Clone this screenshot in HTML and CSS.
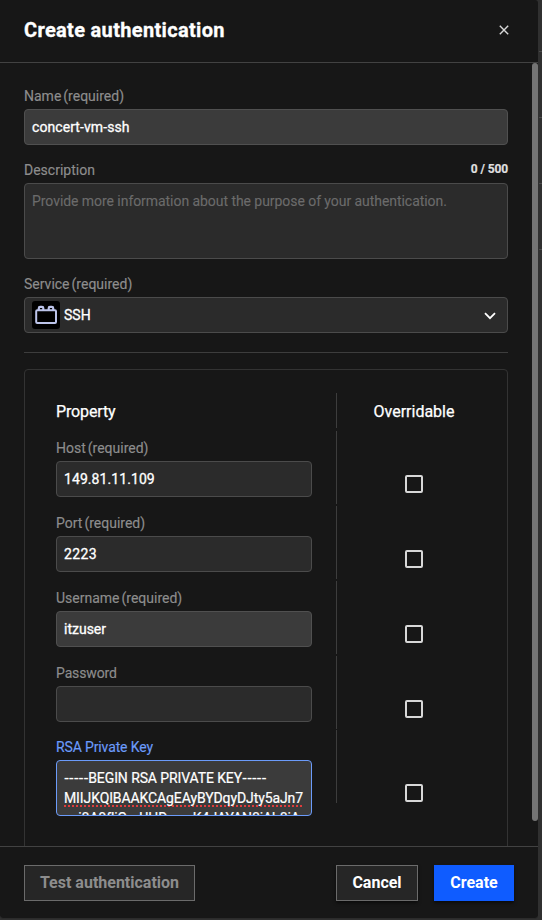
FILE: index.html
```html
<!DOCTYPE html>
<html lang="en">
<head>
<meta charset="utf-8">
<title>Create authentication</title>
<link rel="stylesheet" href="styles.css">
</head>
<body>
<div class="dialog">
  <header class="header">
    <h1 class="title"><span>Create authentication</span></h1>
    <svg class="close" width="10" height="10" viewBox="0 0 10 10"><path d="M.8 .8L9.2 9.2M9.2 .8L.8 9.2" fill="none" stroke="#d8d8d8" stroke-width="1.4"/></svg>
  </header>
  <div class="viewport">
    <main class="content">
      <section class="field">
        <div class="label"><span>Name</span><span class="req">(required)</span></div>
        <div class="input filled"><span class="t-name">concert-vm-ssh</span></div>
      </section>
      <section class="field">
        <div class="label"><span class="t-desc">Description</span><span class="counter">0 / 500</span></div>
        <div class="input area"><span class="placeholder">Provide more information about the purpose of your authentication.</span></div>
      </section>
      <section class="field">
        <div class="label"><span>Service</span><span class="req">(required)</span></div>
        <div class="input select">
          <svg class="brick" width="28" height="28" viewBox="0 0 28 28"><rect width="28" height="28" rx="3" fill="#000"/><rect x="4.2" y="9.3" width="19.8" height="12.7" rx="1" fill="none" stroke="#bcc4ea" stroke-width="2"/><path d="M6.8 9V7.2Q6.8 5.9 8.1 5.9H10Q11.3 5.9 11.3 7.2V9M16.7 9V7.2Q16.7 5.9 18 5.9H19.9Q21.2 5.9 21.2 7.2V9" fill="none" stroke="#bcc4ea" stroke-width="2.2"/></svg>
          <span class="t-ssh">SSH</span>
          <svg class="chevron" width="12" height="8" viewBox="0 0 12 8"><path d="M1 1.2L6 6.2L11 1.2" fill="none" stroke="#fff" stroke-width="1.8"/></svg>
        </div>
      </section>
      <hr class="divider">
      <section class="panel">
        <div class="row head"><div class="cell"><span class="t-prop">Property</span></div><div class="over"><span>Overridable</span></div></div>
        <div class="row">
          <div class="cell"><div class="label"><span>Host</span><span class="req">(required)</span></div><div class="input"><span class="t-host">149.81.11.109</span></div></div>
          <div class="over"><i class="check"></i></div>
        </div>
        <div class="row">
          <div class="cell"><div class="label"><span>Port</span><span class="req">(required)</span></div><div class="input"><span class="t-port">2223</span></div></div>
          <div class="over"><i class="check"></i></div>
        </div>
        <div class="row">
          <div class="cell"><div class="label"><span>Username</span><span class="req">(required)</span></div><div class="input filled"><span class="t-user">itzuser</span></div></div>
          <div class="over"><i class="check"></i></div>
        </div>
        <div class="row">
          <div class="cell"><div class="label"><span class="t-pass">Password</span></div><div class="input"></div></div>
          <div class="over"><i class="check"></i></div>
        </div>
        <div class="row last">
          <div class="cell"><div class="label blue"><span class="t-key">RSA Private Key</span></div><div class="input filled key"><span class="t-begin"><b>-----</b>BEGIN RSA PRIVATE KEY<b>-----</b></span><span class="spell">MIIJKQIBAAKCAgEAyBYDqyDJty5aJn7</span><span class="t-cut">yoi8A9fliQmUHDwocK4dAYAN8iAh8iA</span></div></div>
          <div class="over"><i class="check"></i></div>
        </div>
      </section>
    </main>
    <div class="track"><div class="thumb"></div></div>
  </div>
  <footer class="footer">
    <div class="button disabled"><span>Test authentication</span></div>
    <div class="button cancel"><span>Cancel</span></div>
    <div class="button primary"><span>Create</span></div>
  </footer>
</div>
</body>
</html>
```

FILE: styles.css
```css
* { box-sizing: border-box; }
body {
  margin: 0;
  width: 542px;
  height: 920px;
  overflow: hidden;
  background: linear-gradient(#4b4b4b, #4b4b4b) 539px 51px / 3px 1px no-repeat,
    linear-gradient(#4b4b4b, #4b4b4b) 539px 117px / 3px 1px no-repeat,
    linear-gradient(#4b4b4b, #4b4b4b) 539px 183px / 3px 1px no-repeat,
    linear-gradient(#4b4b4b, #4b4b4b) 539px 249px / 3px 1px no-repeat, #303030;
  color: #fff;
  font: 14px/20px Roboto, sans-serif;
}
.dialog {
  display: flex;
  flex-direction: column;
  width: 538px;
  height: 919px;
  background: #171717;
  border-bottom: 1px solid #2b2b2b;
  border-radius: 0 3px 4px 4px;
  overflow: hidden;
}
.header {
  display: flex;
  justify-content: space-between;
  align-items: center;
  flex: none;
  height: 63px;
  padding: 0 29px 2px 24px;
  border-bottom: 1px solid #424242;
}
.title { margin: 0; font-size: 20px; line-height: 24px; font-weight: 700; letter-spacing: .33px; -webkit-text-stroke: .3px; }
.viewport { display: flex; height: 783px; overflow: hidden; }
.content { flex: 1; padding: 24px 30px 0 24px; }
.field { margin-bottom: 16px; }
.label { display: flex; gap: 2px; height: 22px; color: #8d8d8d; line-height: 19px; -webkit-text-stroke: .15px; }
.counter { margin-left: auto; color: #e0e0e0; font-size: 12px; font-weight: 700; line-height: 16px; letter-spacing: -.1px; }
.input {
  display: flex;
  align-items: center;
  height: 36px;
  padding: 0 7px;
  background: #2b2b2b;
  border: 1px solid #4b4b4b;
  border-radius: 4px;
  -webkit-text-stroke: .3px;
}
.filled { background: #3b3b3b; border-color: #505050; }
.area { height: 76px; align-items: flex-start; padding-top: 7px; -webkit-text-stroke: .1px; }
.placeholder { color: #6b6b6b; letter-spacing: -.055px; }
.t-name, .t-host { letter-spacing: .08px; }
.t-port { letter-spacing: .4px; }
.t-prop, .t-pass, .t-key { letter-spacing: -.13px; }
.brick { margin-right: 4px; }
.chevron { margin: 2px 4px 0 auto; }
.divider { height: 1px; margin: 19px 0 16px; border: 0; background: #3d3d3d; }
.panel {
  height: 520px;
  padding: 23px 31px 0;
  border: 1px solid #333;
  border-radius: 4px;
}
.row { display: flex; height: 73px; margin-bottom: 2px; }
.cell { width: 281px; flex: none; padding: 8px 24px 0 0; border-right: 1px solid #3d3d3d; }
.over { display: flex; justify-content: center; flex: 1; padding: 44px 0 0 15px; }
.head { height: 35px; margin-bottom: 3px; font-size: 16px; -webkit-text-stroke: .25px; }
.head .cell, .head .over { padding-top: 9px; }
.check { width: 18px; height: 18px; border: 2px solid #d8d8d8; border-radius: 2px; }
.last { margin-top: -1px; }
.last .over { padding-top: 54px; }
.blue { color: #6b9bfa; }
.key { display: block; height: 56px; padding-top: 7px; border-color: #6b9bfa; overflow: hidden; -webkit-text-stroke: .2px; }
.key span { display: block; white-space: nowrap; width: max-content; letter-spacing: -.1px; }
.key b { font-weight: 500; font-size: 15px; letter-spacing: -.25px; -webkit-text-stroke: 0; line-height: 1; }
.key .spell { text-decoration: underline dotted #e03c3c 2px; text-underline-offset: 2px; text-decoration-skip-ink: none; }
.track { width: 6px; margin-left: -6px; }
.thumb { width: 6px; height: 758px; background: #747474; border-radius: 3px; }
.footer {
  display: flex;
  flex: none;
  height: 72px;
  padding: 18px 24px 0;
  border-top: 1px solid #424242;
}
.button {
  display: flex;
  align-items: center;
  justify-content: center;
  height: 36px;
  font-size: 16px;
  font-weight: 700;
}
.disabled { width: 171px; margin-right: auto; background: #262626; border: 1px solid #6b6b6b; color: #8d8d8d; }
.cancel { width: 82px; margin-right: 16px; background: #262626; border: 1px solid #6b6b6b; box-shadow: 0 2px 3px #0008; }
.primary { width: 80px; background: #0f5cff; box-shadow: 0 2px 3px #0008; }
```
